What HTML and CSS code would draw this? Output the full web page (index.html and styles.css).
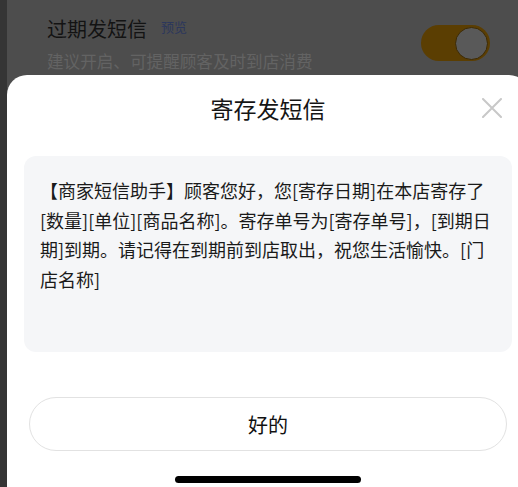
FILE: index.html
```html
<!DOCTYPE html>
<html lang="zh-CN">
<head>
<meta charset="utf-8">
<link rel="stylesheet" href="styles.css">
</head>
<body>
<div class="frame">
  <div class="edge"></div>
  <div class="screen">
    <div class="setting">
      <div class="setting-text">
        <div class="setting-title">过期发短信<span class="preview">预览</span></div>
        <div class="setting-sub">建议开启、可提醒顾客及时到店消费</div>
      </div>
      <div class="toggle"><div class="knob"></div></div>
    </div>
    <div class="sheet">
      <div class="sheet-head">
        <div class="sheet-title">寄存发短信</div>
        <svg class="close" viewBox="0 0 20 20" width="20" height="20"><path d="M1 1L19 19M19 1L1 19" stroke="#c8c8c8" stroke-width="2" fill="none" stroke-linecap="round"/></svg>
      </div>
      <div class="message">【商家短信助手】顾客您好，您[寄存日期]在本店寄存了[数量][单位][商品名称]。寄存单号为[寄存单号]，[到期日期]到期。请记得在到期前到店取出，祝您生活愉快。[门店名称]</div>
      <div class="ok">好的</div>
      <div class="home"></div>
    </div>
  </div>
</div>
</body>
</html>
```
FILE: styles.css
```css
html, body {
  margin: 0;
  padding: 0;
  width: 518px;
  height: 487px;
  overflow: hidden;
  background: #4d4d4d;
  font-family: "Noto Sans CJK SC", "Noto Sans", sans-serif;
}
.frame {
  display: flex;
  width: 529px;
  height: 487px;
}
.edge {
  width: 7px;
  flex: none;
  background: #353535;
}
.screen {
  position: relative;
  width: 522px;
  flex: none;
  height: 487px;
  background: #4d4d4d;
}
.setting {
  display: flex;
  justify-content: space-between;
  align-items: flex-start;
  padding: 14px 39px 0 40px;
}
.setting-title {
  display: flex;
  align-items: center;
  font-size: 20px;
  line-height: 30px;
  color: #131313;
}
.preview {
  font-size: 13px;
  color: #2c375c;
  margin-left: 14px;
  margin-top: -4px;
}
.setting-sub {
  margin-top: 5px;
  font-size: 16.6px;
  line-height: 24px;
  color: #636363;
}
.toggle {
  margin-top: 11px;
  width: 69px;
  height: 36px;
  border-radius: 18px;
  background: #5b3e02;
  display: flex;
  justify-content: flex-end;
  align-items: center;
  padding-right: 2px;
  box-sizing: border-box;
}
.knob {
  width: 31px;
  height: 31px;
  border-radius: 50%;
  background: #595959;
  border: 1px solid #3e2a02;
}
.sheet {
  position: absolute;
  left: 0;
  right: 0;
  bottom: 0;
  height: 412px;
  box-sizing: border-box;
  background: #fff;
  border-radius: 20px 20px 0 0;
  padding: 0 17px 4px;
  display: flex;
  flex-direction: column;
}
.sheet-head {
  height: 66px;
  display: grid;
  grid-template-columns: 1fr auto 1fr;
  align-items: center;
}
.sheet-title {
  grid-column: 2;
  font-size: 23px;
  color: #151515;
  line-height: 30px;
}
.close {
  grid-column: 3;
  justify-self: end;
  margin-right: 10px;
}
.message {
  margin-top: 15px;
  height: 196px;
  box-sizing: border-box;
  background: #f5f6f8;
  border-radius: 12px;
  padding: 20px 16px 0;
  font-size: 18px;
  line-height: 29.5px;
  color: #1a1a1a;
}
.ok {
  margin: 45px 5px 0;
  height: 54px;
  box-sizing: border-box;
  border: 1px solid #e2e2e2;
  border-radius: 27px;
  display: flex;
  justify-content: center;
  align-items: center;
  font-size: 20px;
  color: #111;
}
.home {
  margin: 25px auto 0;
  width: 186px;
  height: 7px;
  border-radius: 4px;
  background: #000;
}
```
